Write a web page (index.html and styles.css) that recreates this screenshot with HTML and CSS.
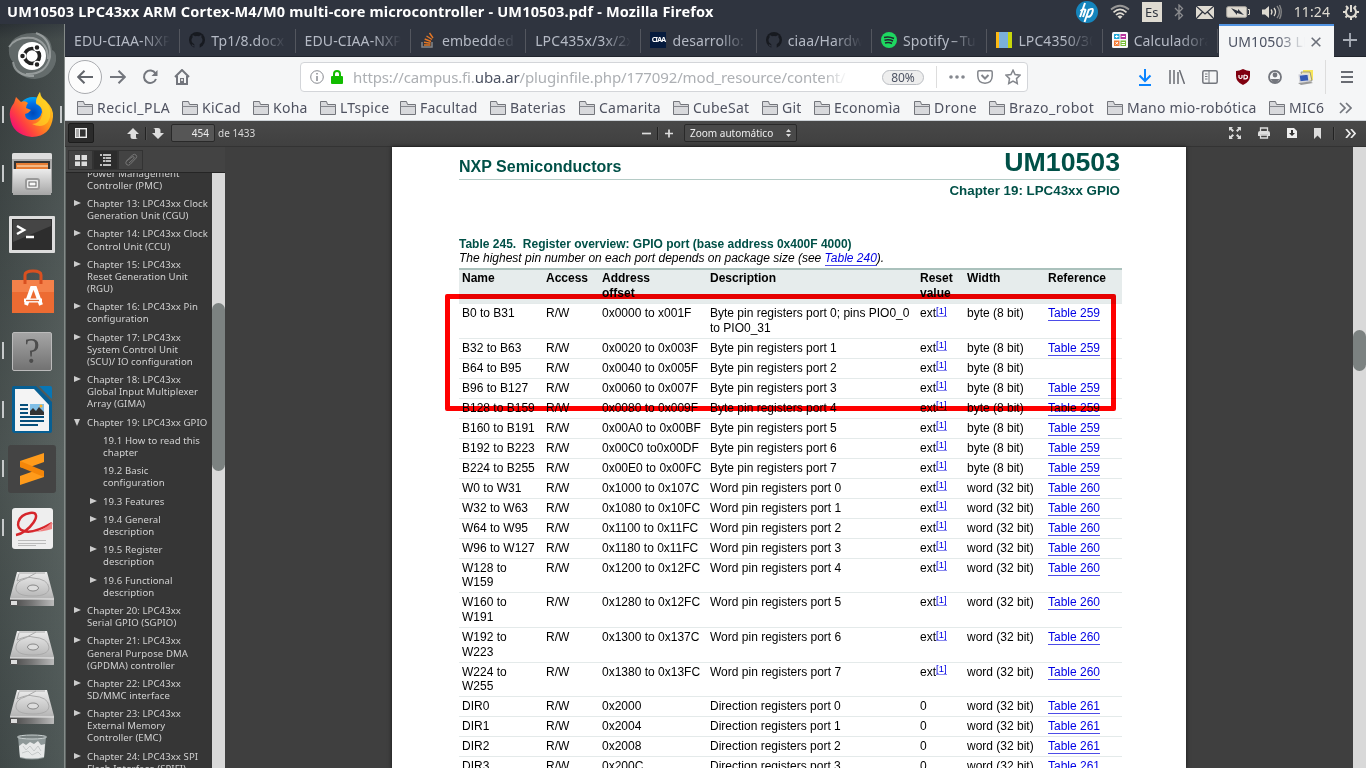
FILE: index.html
```html
<!DOCTYPE html>
<html lang="es">
<head>
<meta charset="utf-8">
<title>UM10503.pdf - Mozilla Firefox</title>
<link rel="stylesheet" href="styles.css">
</head>
<body>
<svg class="defs" width="0" height="0">
<defs>
<linearGradient id="metal" x1="0" y1="0" x2="0" y2="1"><stop offset="0" stop-color="#ececec"/><stop offset="1" stop-color="#a5a5a5"/></linearGradient>
<linearGradient id="edge"><stop offset="0" stop-color="#444"/><stop offset=".5" stop-color="#777"/><stop offset="1" stop-color="#bbb"/></linearGradient>
<linearGradient id="fox" x1="1" y1="0" x2="0" y2=".8"><stop offset="0" stop-color="#ffe226"/><stop offset=".45" stop-color="#ff9417"/><stop offset=".75" stop-color="#ff4140"/><stop offset="1" stop-color="#f0047f"/></linearGradient>
<radialGradient id="globe"><stop offset="0" stop-color="#0048b8"/><stop offset=".6" stop-color="#0070e8"/><stop offset="1" stop-color="#00a5f4"/></radialGradient>
<symbol id="folder" viewBox="0 0 16 14"><path d="M.5 13.500V.5H6.500L7.500 3.500H15.500V13.500Z" fill="#d8d9dc" stroke="#73757b"/><path d="M.5 5.500H15.500" stroke="#85878d"/></symbol>
<symbol id="disk" viewBox="0 0 48 38"><path d="M9 2H39L46 28V35Q46 36 45 36H3Q2 36 2 35V28Z" fill="url(#metal)"/><path d="M2 29H46V35Q46 36 45 36H3Q2 36 2 35Z" fill="url(#edge)"/><path d="M2 29H46" stroke="#eee"/><rect x="3" y="31" width="6" height="4" fill="#ddd"/><path d="M11 3H37M11 4L9 11Q20 6 25 8Q40 9 41 18C41 24 34 26 25 26C13 26 7 23 8 17Q9 11 17 9L28 3" fill="none" stroke="#aaa"/><ellipse cx="25" cy="18" rx="5.500" ry="3" fill="#ddd" stroke="#888"/></symbol>
<symbol id="github" viewBox="0 0 16 16"><circle cx="8" cy="8" r="8" fill="#171a20"/><path d="M5.300 16V12.200C1.500 10.500 2.300 6.500 3.600 5.600L3.500 3.300Q5 3.300 6 4.200Q8 3.800 10 4.200Q11 3.300 12.500 3.300L12.400 5.600C13.700 6.500 14.500 10.500 10.700 12.200V16Z" fill="#2f343f"/><path d="M5.300 13.800Q3.800 14.200 3 12.500" fill="none" stroke="#2f343f" stroke-width="1.200"/></symbol>
<symbol id="clip" viewBox="0 0 14 14"><path d="M2.500 8L8.500 2Q10.500 .5 12 2Q13.500 3.500 12 5.200L6 11.500Q4.500 13 2.500 11.500Q1 10 2.500 8L8 4Q9.500 3 10 4Q10.500 5 9.500 6L5 10" fill="none" stroke="#777"/></symbol>
</defs>
</svg>
<header class="titlebar">
  <div class="window-title">UM10503 LPC43xx ARM Cortex-M4/M0 multi-core microcontroller - UM10503.pdf - Mozilla Firefox</div>
  <div class="indicators">
    <svg class="i-hp" width="22" height="22" viewBox="0 0 22 22"><circle cx="11" cy="11" r="11" fill="#1585bd"/><path d="M9 2L4 16M4.500 10Q8 7 9.500 9L7 16M13 8L8.500 21M12.700 9Q18 6 16.500 11Q15 17 10.500 15.500" fill="none" stroke="#fff" stroke-width="2"/></svg>
    <svg width="20" height="16" viewBox="0 0 20 16"><g fill="none" stroke="#dfdbd2" stroke-width="1.700"><path d="M1 5.500Q10-2 19 5.500" opacity=".6"/><path d="M3.500 8.300Q10 2.500 16.500 8.300M6 11Q10 7 14 11"/></g><path d="M7.500 12.500Q10 10.500 12.500 12.500L10 15Z" fill="#dfdbd2"/></svg>
    <span class="lang">Es</span>
    <svg width="10" height="16" viewBox="0 0 10 16"><path d="M1 4L8.500 11.500L5 15V1L8.500 4.500L1 12" fill="none" stroke="#8b8c8f" stroke-width="1.300"/></svg>
    <svg width="18" height="13" viewBox="0 0 18 13"><rect width="18" height="13" fill="#dfdbd2"/><path d="M0 0L9 8L18 0M0 13L6.500 6M18 13L11.500 6" fill="none" stroke="#2f343f" stroke-width="1.300"/></svg>
    <svg width="24" height="12" viewBox="0 0 24 12"><rect x=".7" y=".7" width="20" height="10.600" rx="1.500" fill="#dfdbd2" stroke="#aaa79f"/><path d="M22 3.500H23.500V8.500H22" fill="none" stroke="#dfdbd2"/><path d="M5 2L12 5L12 3L18 9L11 7V9Z" fill="#2f343f"/></svg>
    <svg width="20" height="14" viewBox="0 0 20 14"><path d="M0 4.500H3L7 1V13L3 9.500H0Z" fill="#dfdbd2"/><g fill="none" stroke="#dfdbd2" stroke-width="1.300"><path d="M9 4.500Q11 7 9 9.500M12 3Q15 7 12 11"/><path d="M15 1Q20 7 15 13M17.500 0Q21 7 17.500 14" opacity=".5"/></g></svg>
    <span class="clock">11:24</span>
    <svg width="16" height="16" viewBox="0 0 16 16"><path d="M5.500 3.700A5 5 0 1 0 10.500 3.700M8 1V8" fill="none" stroke="#dfdbd2" stroke-width="2"/><path d="M3 2L5 4M13 2L11 4M0 8H3M16 8H13M2.500 13.500L4.500 11.500M13.500 13.500L11.500 11.500M8 16V13" stroke="#dfdbd2" stroke-width="2"/></svg>
  </div>
</header>
<div class="desktop">
<nav class="launcher">
  <div class="dock"><svg width="48" height="48" viewBox="0 0 48 48"><path d="M4 9Q12 0 28 1Q43 3 44 18Q49 20 48 29Q44 45 27 47Q10 47 5 30Q0 25 1 15Z" fill="#777e7e" opacity=".65"/><path d="M1 15Q8 4 25 6Q40 10 40 27M28 1Q43 6 42 25Q38 43 18 42M5 30Q7 44 26 44" fill="none" stroke="#b2b7b7" opacity=".65" stroke-width="2"/><circle cx="24" cy="24" r="14" fill="#fff"/><circle cx="24" cy="24" r="7.500" fill="none" stroke="#222" stroke-width="3.600"/><g fill="#222" stroke="#fff" stroke-width="1.500"><circle cx="14.500" cy="24" r="3"/><circle cx="29" cy="15.500" r="3"/><circle cx="29" cy="32.500" r="3"/></g></svg></div>
  <div class="dock run active"><svg width="48" height="48" viewBox="0 0 48 48"><circle cx="25" cy="22" r="16" fill="url(#globe)"/><path d="M6 12L8 6L13 11Q17 9 20 12Q18 14 18 17L23 19Q21 22 17 23Q17 29 24 29Q32 29 34 21Q34 15 28 12Q29 5 32 1Q32 7 38 10Q46 18 45 26Q43 45 24 46Q4 44 2 26Q1 20 4 15Z" fill="url(#fox)"/><path d="M32 1Q27 8 28 13Q37 17 34 25Q31 33 24 33Q34 38 40 31Q46 20 37 9Q33 7 32 1" fill="#ffda25" opacity=".65"/></svg></div>
  <div class="dock run"><svg width="48" height="48" viewBox="0 0 48 48"><path d="M4 5Q4 3 6 3H42Q44 3 44 5V43H4Z" fill="#aaa"/><path d="M4 5Q4 3 6 3H42Q44 3 44 5V9H4Z" fill="#ddd"/><rect x="6" y="11" width="36" height="14" fill="#353535"/><path d="M8 13H40V20H8Z" fill="#e77d34"/><path d="M9 16H40" stroke="#fff3d5"/><path d="M5 19H43V45H5Z" fill="url(#metal)"/><rect x="18" y="29" width="13" height="10" rx="2" fill="#eee" stroke="#999" stroke-width="2"/><rect x="21" y="32" width="7" height="4" fill="#f8f8f8" stroke="#666"/></svg></div>
  <div class="dock terminal"><svg width="48" height="48" viewBox="0 0 48 48"><rect x="1" y="5" width="46" height="37" rx="1" fill="#ddd"/><rect x="4" y="8" width="40" height="31" fill="#2d2d2d"/><path d="M5 9H43V15L5 31Z" fill="#454545"/><path d="M9 15L16 19L9 23M18 26H26" stroke="#fff" stroke-width="2.500" fill="none"/></svg></div>
  <div class="dock"><svg width="48" height="48" viewBox="0 0 48 48"><path d="M4 12H46V45H4Z" fill="#ed6b32"/><path d="M4 12H46V24H4Z" fill="#f4814a"/><path d="M17 16V7Q17 3 25 3T33 7V16" fill="none" stroke="#d95020" stroke-width="3"/><path d="M18 37L24 20H27L33 37" fill="none" stroke="#fff" stroke-width="4"/><path d="M16 32.500H34" stroke="#fff" stroke-width="4"/><path d="M18 32.500H31" stroke="#e36a35" stroke-width="1.300"/></svg></div>
  <div class="dock run"><span class="unknown">?</span></div>
  <div class="dock run"><svg width="48" height="48" viewBox="0 0 48 48"><path d="M4 2Q4 0 6 0H28L44 16V45Q44 47 42 47H7Q4 47 4 44Z" fill="#075f93"/><path d="M31 0H42Q44 0 44 2V13Z" fill="#0876b5"/><path d="M7 3H26L41 19V45H7Z" fill="#f4f4f4"/><path d="M12 19H20M12 23H20M12 27H20M12 31H36M12 35H36M12 39H30" stroke="#074f7b" stroke-width="2"/><rect x="22" y="18" width="14" height="11" fill="#80bfe7"/><path d="M22 29V25L25 22L28 25L31 21L36 26V29Z" fill="#333"/><circle cx="33" cy="20" r="1.500" fill="#ffb020"/></svg></div>
  <div class="dock run"><svg width="48" height="48" viewBox="0 0 48 48"><rect width="48" height="48" rx="3" fill="#444"/><path d="M12 16L36 8V17L22 22L36 26V32L12 40V31L26 26L12 22Z" fill="#ff9b1b"/><path d="M12 16V22L36 32V26Z" fill="#f48609"/></svg></div>
  <div class="dock run"><svg width="48" height="48" viewBox="0 0 48 48"><rect x="4" y="4" width="41" height="41" rx="3" fill="#eee"/><path d="M8 31C21 29 37 7 22 9C9 11 6 25 16 27Q25 30 44 19" fill="none" stroke="#d6262b" stroke-width="2.500"/><path d="M23 28Q35 28 44 18V25Q35 28 23 28" fill="#f08080"/><path d="M10 36.500H38M10 39.500H38M10 41.500H28" stroke="#bbb"/></svg></div>
  <div class="dock disk"><svg width="48" height="38"><use href="#disk"/></svg></div>
  <div class="dock disk"><svg width="48" height="38"><use href="#disk"/></svg></div>
  <div class="dock disk"><svg width="48" height="38"><use href="#disk"/></svg></div>
  <div class="trash"><svg width="32" height="26" viewBox="0 0 32 26"><path d="M2 3H30L28 24Q16 27 4 24Z" fill="#8e9898"/><ellipse cx="16" cy="3" rx="14.500" ry="2" fill="#778080" stroke="#c9d0d0"/><path d="M3 12L7 9L10 11L14 8L18 10L22 7L25 11L29 10L28 23Q16 26 4 23Z" fill="#e6e8e8"/><path d="M7 12L10 16L14 12L18 17L22 12L25 17M6 19L12 17L16 21L22 18L25 21" fill="none" stroke="#c6caca"/></svg></div>
</nav>
<main class="browser">
  <div class="tabs">
    <div class="tab"><span>EDU-CIAA-NXP</span></div>
    <div class="tab"><svg width="16" height="16"><use href="#github"/></svg><span>Tp1/8.docx</span></div>
    <div class="tab"><span>EDU-CIAA-NXP</span></div>
    <div class="tab"><svg width="16" height="16" viewBox="0 0 16 16"><path d="M2 10V15H12V10" fill="none" stroke="#85868a" stroke-width="1.500"/><path d="M4 13H10.500M4 10.300L10.500 11.200M4.700 7L11 9.500M6.500 4L12 7.500M9.500 1L13 6" stroke="#e47725" stroke-width="1.400"/></svg><span>embedded</span></div>
    <div class="tab"><span>LPC435x/3x/2x</span></div>
    <div class="tab"><b class="ciaa">CIAA</b><span>desarrollo:</span></div>
    <div class="tab"><svg width="16" height="16"><use href="#github"/></svg><span>ciaa/Hardware</span></div>
    <div class="tab"><svg width="16" height="16" viewBox="0 0 16 16"><circle cx="8" cy="8" r="8" fill="#1ed760"/><path d="M3 5.500Q8 4 13 6.500M3.500 8.300Q8 7 12 9M4 11Q8 10 11 11.500" fill="none" stroke="#20262e" stroke-width="1.500"/></svg><span class="tight">Spotify – Tu</span></div>
    <div class="tab"><i class="stripes"></i><span>LPC4350/30</span></div>
    <div class="tab"><svg width="16" height="16" viewBox="0 0 16 16"><rect width="16" height="16" rx="1.500" fill="#f8f8fa"/><path d="M2 2H7.500V7H2Z" fill="#23a8d9"/><path d="M8.500 2H14V7H8.500Z" fill="#b7359f"/><path d="M2 8.500H7.500V14H2Z" fill="#f47a35"/><path d="M8.500 8.500H14V14H8.500Z" fill="#77bc35"/><path d="M3 4.500H6.500M4.700 3V6M9.500 4.500H13M3.500 10L6 12.500M6 10L3.500 12.500M9.500 10.500H13M9.500 12.500H13" stroke="#fff"/></svg><span>Calculadora</span></div>
    <div class="tab current"><span>UM10503 LPC</span><svg width="10" height="10" viewBox="0 0 10 10"><path d="M.7 .7L9.300 9.300M9.300 .7L.7 9.300" stroke="#6c707a" stroke-width="1.600"/></svg></div>
    <div class="newtab"><svg width="14" height="14" viewBox="0 0 14 14"><path d="M7 0V14M0 7H14" stroke="#aaafb8" stroke-width="1.800"/></svg></div>
  </div>
  <div class="nav">
    <span class="back"><svg width="16" height="14" viewBox="0 0 16 14"><path d="M16 7H1M7.500 .7L1.200 7L7.500 13.300" fill="none" stroke="#63666c" stroke-width="2"/></svg></span>
    <svg class="forward" width="16" height="14" viewBox="0 0 16 14"><path d="M0 7H15M8.500 .7L14.800 7L8.500 13.300" fill="none" stroke="#73767d" stroke-width="2"/></svg>
    <svg class="reload" width="16" height="16" viewBox="0 0 16 16"><path d="M13.500 4.500A6.200 6.200 0 1 0 14 10" fill="none" stroke="#73767d" stroke-width="2"/><path d="M15.500 1V7H9.500Z" fill="#73767d"/></svg>
    <svg class="home" width="16" height="16" viewBox="0 0 16 16"><path d="M1 8L8 1L15 8M3 7V15H13V7" fill="none" stroke="#73767d" stroke-width="2"/><path d="M6 15V9H10V15" fill="#73767d"/><circle cx="8" cy="11" r="1" fill="#fff"/></svg>
    <div class="urlbox">
      <svg width="14" height="14" viewBox="0 0 14 14"><circle cx="7" cy="7" r="6.300" fill="none" stroke="#888b91"/><path d="M7 6V11M7 3V4.500" stroke="#888b91" stroke-width="1.500"/></svg>
      <svg class="lock" width="12" height="14" viewBox="0 0 12 14"><path d="M3 7V4Q3 1 6 1T9 4V7" fill="none" stroke="#12bc00" stroke-width="2"/><rect y="6" width="12" height="8" rx="1" fill="#12bc00"/></svg>
      <span class="url">https://campus.fi.<b>uba.ar</b>/pluginfile.php/177092/mod_resource/content/</span>
      <span class="zoomlevel">80%</span><i class="urlsep"></i>
      <svg class="dots" width="18" height="4" viewBox="0 0 18 4"><g fill="#85888f"><circle cx="3" cy="2" r="1.800"/><circle cx="9" cy="2" r="1.800"/><circle cx="15" cy="2" r="1.800"/></g></svg>
      <svg class="pocket" width="16" height="14" viewBox="0 0 16 14"><path d="M2 .8H14Q15.200 .8 15.200 2V6Q15 13 8 13.200Q1 13 .8 6V2Q.8 .8 2 .8Z" fill="none" stroke="#83868c" stroke-width="1.500"/><path d="M4.500 5L8 8.500L11.500 5" fill="none" stroke="#83868c" stroke-width="2"/></svg>
      <svg width="16" height="16" viewBox="0 0 16 16"><path d="M8 1.200L10.100 5.500L15 6.200L11.500 9.600L12.300 14.500L8 12.200L3.700 14.500L4.500 9.600L1 6.200L5.900 5.500Z" fill="none" stroke="#83868c" stroke-width="1.500"/></svg>
    </div>
    <div class="tools">
      <svg width="14" height="17" viewBox="0 0 14 17"><path d="M7 0V12M1.500 6.500L7 12L12.500 6.500M1 16H13" fill="none" stroke="#0a84ff" stroke-width="2"/></svg>
      <svg width="16" height="14" viewBox="0 0 16 14"><path d="M1 0V14M5 0V14M9 2V14M10.500 0L15.500 14" stroke="#696c73" stroke-width="1.500"/></svg>
      <svg width="16" height="14" viewBox="0 0 16 14"><rect x=".8" y=".8" width="14.400" height="12.400" rx="1.500" fill="none" stroke="#73767d" stroke-width="1.500"/><path d="M7 1V13M3 4H5.500M3 6.500H5.500M3 9H5.500" stroke="#73767d"/></svg>
      <svg width="16" height="16" viewBox="0 0 16 16"><path d="M8 0Q12 2 15 2V7Q15 13 8 16Q1 13 1 7V2Q4 2 8 0Z" fill="#800010"/><path d="M4 6V8.500Q5.500 10.500 7 8.500V6M9 6V10Q12.500 10 12.500 8Q12.500 6 9 6" fill="none" stroke="#fff" stroke-width="1.200"/></svg>
      <svg width="14" height="14" viewBox="0 0 14 14"><circle cx="7" cy="7" r="6" fill="none" stroke="#73767d" stroke-width="1.800"/><circle cx="7" cy="5" r="2.400" fill="#73767d"/><path d="M2.500 9H11.500Q9 12.500 7 12.500T2.500 9" fill="#73767d"/></svg>
      <svg width="16" height="16" viewBox="0 0 16 16"><path d="M5 1H15V11H13L5 7Z" fill="#f8e65a"/><path d="M3 3H12L14 12H5Z" fill="#f5ebb0" stroke="#777" stroke-width=".7"/><path d="M1 6L10 5L11 12L2 13Z" fill="#3559b4" stroke="#d9d9dd" stroke-width="1.300"/><path d="M0 14L12 12.500L15 14L3 16Z" fill="#999"/></svg>
      <i class="navsep"></i><svg class="hamburger" width="12" height="12" viewBox="0 0 12 12"><path d="M0 1H12M0 6H12M0 11H12" stroke="#696c73" stroke-width="1.800"/></svg>
    </div>
  </div>
  <div class="bookmarks">
    <span class="wide"><svg><use href="#folder"/></svg>Recicl_PLA</span><span><svg><use href="#folder"/></svg>KiCad</span><span><svg><use href="#folder"/></svg>Koha</span><span><svg><use href="#folder"/></svg>LTspice</span><span><svg><use href="#folder"/></svg>Facultad</span><span><svg><use href="#folder"/></svg>Baterias</span><span><svg><use href="#folder"/></svg>Camarita</span><span><svg><use href="#folder"/></svg>CubeSat</span><span><svg><use href="#folder"/></svg>Git</span><span><svg><use href="#folder"/></svg>Economìa</span><span class="wide"><svg><use href="#folder"/></svg>Drone</span><span class="wide"><svg><use href="#folder"/></svg>Brazo_robot</span><span><svg><use href="#folder"/></svg>Mano mio-robótica</span><span><svg><use href="#folder"/></svg>MIC6</span>
    <svg class="more" viewBox="0 0 13 12"><path d="M1 1L6 6L1 11M7 1L12 6L7 11" fill="none" stroke="#73767d" stroke-width="1.700"/></svg>
  </div>
  <div class="pdfbar">
    <div class="toggle"><svg width="12" height="10" viewBox="0 0 12 10"><rect x=".7" y=".7" width="10.600" height="8.600" fill="#333" stroke="#eee" stroke-width="1.400"/><path d="M1 1H4V9H1Z" fill="#aaa"/><path d="M4.500 1V9" stroke="#eee"/></svg></div>
    <svg class="up" width="12" height="11" viewBox="0 0 12 11"><path d="M6 0L12 6H9V9Q9 11 11 11H6Q3.500 11 3.500 8.500V6H0Z" fill="#ddd"/></svg><i class="split"></i>
    <svg class="down" width="12" height="11" viewBox="0 0 12 11"><path d="M1 0H6Q8.500 0 8.500 2.500V5H12L6 11L0 5H3V2Q3 0 1 0Z" fill="#ddd"/></svg>
    <div class="pageno">454</div><span class="pagecount">de 1433</span>
    <svg class="minus" width="9" height="9" viewBox="0 0 9 9"><path d="M0 4.500H9" stroke="#ddd" stroke-width="1.700"/></svg><i class="split"></i><svg class="plus" width="9" height="9" viewBox="0 0 9 9"><path d="M0 4.500H8M4 .5V8.500" stroke="#ddd" stroke-width="1.700"/></svg>
    <div class="zoomselect">Zoom automático<svg width="5" height="8" viewBox="0 0 5 8"><path d="M0 3L2.500 0L5 3ZM0 5H5L2.500 8Z" fill="#ddd"/></svg></div>
    <div class="pdftools">
      <svg width="12" height="12" viewBox="0 0 12 12"><path d="M0 0H4L2.700 1.300L5 3.500L3.500 5L1.300 2.700L0 4ZM12 0V4L10.700 2.700L8.500 5L7 3.500L9.300 1.300L8 0ZM0 12V8L1.300 9.300L3.500 7L5 8.500L2.700 10.700L4 12ZM12 12H8L9.300 10.700L7 8.500L8.500 7L10.700 9.300L12 8Z" fill="#ddd"/></svg>
      <svg width="12" height="12" viewBox="0 0 12 12"><path d="M2.500 4V1H9.500V4M2.500 8H9.500V11H2.500Z" fill="none" stroke="#ddd" stroke-width="1.300"/><path d="M2 4H10Q12 4 12 6V9H10V7.500H2V9H0V6Q0 4 2 4Z" fill="#ddd"/></svg>
      <svg width="10" height="12" viewBox="0 0 10 12"><path d="M0 1H7L10 4V11H0Z" fill="#eee"/><path d="M4 3H6V6H8L5 9L2 6H4Z" fill="#333"/></svg>
      <svg width="7" height="11" viewBox="0 0 7 11"><path d="M0 0H7V11L3.500 7.500L0 11Z" fill="#ddd"/></svg><i class="split"></i>
      <svg width="11" height="9" viewBox="0 0 11 9"><path d="M1 0L5 4.500L1 9M6 0L10 4.500L6 9" fill="none" stroke="#eee" stroke-width="1.700"/></svg>
    </div>
  </div>
  <div class="viewer">
    <aside class="sidebar">
      <div class="sidebar-tools">
        <div><svg width="12" height="11" viewBox="0 0 12 11"><path d="M0 0H5V5H0ZM6.500 0H12V5H6.500ZM0 6.500H5V11H0ZM6.500 6.500H12V11H6.500Z" fill="#ddd"/></svg></div><div class="pressed"><svg width="11" height="12" viewBox="0 0 11 12"><path d="M0 1H2M3 1H11M3 4H5M5.500 4H11M3 7H5M5.500 7H11M0 11H2M3 11H11" stroke="#eee" stroke-width="1.500"/></svg></div><div><svg width="14" height="14"><use href="#clip"/></svg></div>
      </div>
      <div class="outline-area">
        <div class="outline">
          <p class="first">Power Management<br>Controller (PMC)</p>
          <p class="closed">Chapter 13: LPC43xx Clock<br>Generation Unit (CGU)</p>
          <p class="closed">Chapter 14: LPC43xx Clock<br>Control Unit (CCU)</p>
          <p class="closed">Chapter 15: LPC43xx<br>Reset Generation Unit<br>(RGU)</p>
          <p class="closed">Chapter 16: LPC43xx Pin<br>configuration</p>
          <p class="closed">Chapter 17: LPC43xx<br>System Control Unit<br>(SCU)/ IO configuration</p>
          <p class="closed">Chapter 18: LPC43xx<br>Global Input Multiplexer<br>Array (GIMA)</p>
          <p class="open">Chapter 19: LPC43xx GPIO</p>
          <p class="sub">19.1 How to read this<br>chapter</p>
          <p class="sub">19.2 Basic<br>configuration</p>
          <p class="sub closed">19.3 Features</p>
          <p class="sub closed">19.4 General<br>description</p>
          <p class="sub closed">19.5 Register<br>description</p>
          <p class="sub closed">19.6 Functional<br>description</p>
          <p class="closed">Chapter 20: LPC43xx<br>Serial GPIO (SGPIO)</p>
          <p class="closed">Chapter 21: LPC43xx<br>General Purpose DMA<br>(GPDMA) controller</p>
          <p class="closed">Chapter 22: LPC43xx<br>SD/MMC interface</p>
          <p class="closed">Chapter 23: LPC43xx<br>External Memory<br>Controller (EMC)</p>
          <p class="closed">Chapter 24: LPC43xx SPI<br>Flash Interface (SPIFI)</p>
        </div>
        <div class="scroll side-scroll"><i></i></div>
      </div>
    </aside>
    <section class="canvas">
      <article class="page">
        <div class="page-head"><span>NXP Semiconductors</span><strong>UM10503</strong></div>
        <div class="chapter">Chapter 19: LPC43xx GPIO</div>
        <div class="caption">Table 245.&nbsp; Register overview: GPIO port (base address 0x400F 4000)</div>
        <div class="note">The highest pin number on each port depends on package size (see <a>Table 240</a>).</div>
        <table>
          <colgroup><col class="c1"><col class="c2"><col class="c3"><col class="c4"><col class="c5"><col class="c6"><col class="c7"></colgroup>
          <thead><tr><th>Name</th><th>Access</th><th>Address<br>offset</th><th>Description</th><th>Reset<br>value</th><th>Width</th><th>Reference</th></tr></thead>
          <tbody>
          <tr class="tall"><td>B0 to B31</td><td>R/W</td><td>0x0000 to x001F</td><td>Byte pin registers port 0; pins PIO0_0<br>to PIO0_31</td><td>ext<sup>[1]</sup></td><td>byte (8 bit)</td><td><a>Table 259</a></td></tr>
          <tr><td>B32 to B63</td><td>R/W</td><td>0x0020 to 0x003F</td><td>Byte pin registers port 1</td><td>ext<sup>[1]</sup></td><td>byte (8 bit)</td><td><a>Table 259</a></td></tr>
          <tr><td>B64 to B95</td><td>R/W</td><td>0x0040 to 0x005F</td><td>Byte pin registers port 2</td><td>ext<sup>[1]</sup></td><td>byte (8 bit)</td><td></td></tr>
          <tr><td>B96 to B127</td><td>R/W</td><td>0x0060 to 0x007F</td><td>Byte pin registers port 3</td><td>ext<sup>[1]</sup></td><td>byte (8 bit)</td><td><a>Table 259</a></td></tr>
          <tr><td>B128 to B159</td><td>R/W</td><td>0x0080 to 0x009F</td><td>Byte pin registers port 4</td><td>ext<sup>[1]</sup></td><td>byte (8 bit)</td><td><a>Table 259</a></td></tr>
          <tr><td>B160 to B191</td><td>R/W</td><td>0x00A0 to 0x00BF</td><td>Byte pin registers port 5</td><td>ext<sup>[1]</sup></td><td>byte (8 bit)</td><td><a>Table 259</a></td></tr>
          <tr><td>B192 to B223</td><td>R/W</td><td>0x00C0 to0x00DF</td><td>Byte pin registers port 6</td><td>ext<sup>[1]</sup></td><td>byte (8 bit)</td><td><a>Table 259</a></td></tr>
          <tr><td>B224 to B255</td><td>R/W</td><td>0x00E0 to 0x00FC</td><td>Byte pin registers port 7</td><td>ext<sup>[1]</sup></td><td>byte (8 bit)</td><td><a>Table 259</a></td></tr>
          <tr><td>W0 to W31</td><td>R/W</td><td>0x1000 to 0x107C</td><td>Word pin registers port 0</td><td>ext<sup>[1]</sup></td><td>word (32 bit)</td><td><a>Table 260</a></td></tr>
          <tr><td>W32 to W63</td><td>R/W</td><td>0x1080 to 0x10FC</td><td>Word pin registers port 1</td><td>ext<sup>[1]</sup></td><td>word (32 bit)</td><td><a>Table 260</a></td></tr>
          <tr><td>W64 to W95</td><td>R/W</td><td>0x1100 to 0x11FC</td><td>Word pin registers port 2</td><td>ext<sup>[1]</sup></td><td>word (32 bit)</td><td><a>Table 260</a></td></tr>
          <tr><td>W96 to W127</td><td>R/W</td><td>0x1180 to 0x11FC</td><td>Word pin registers port 3</td><td>ext<sup>[1]</sup></td><td>word (32 bit)</td><td><a>Table 260</a></td></tr>
          <tr class="tall"><td>W128 to<br>W159</td><td>R/W</td><td>0x1200 to 0x12FC</td><td>Word pin registers port 4</td><td>ext<sup>[1]</sup></td><td>word (32 bit)</td><td><a>Table 260</a></td></tr>
          <tr class="tall"><td>W160 to<br>W191</td><td>R/W</td><td>0x1280 to 0x12FC</td><td>Word pin registers port 5</td><td>ext<sup>[1]</sup></td><td>word (32 bit)</td><td><a>Table 260</a></td></tr>
          <tr class="tall"><td>W192 to<br>W223</td><td>R/W</td><td>0x1300 to 0x137C</td><td>Word pin registers port 6</td><td>ext<sup>[1]</sup></td><td>word (32 bit)</td><td><a>Table 260</a></td></tr>
          <tr class="tall"><td>W224 to<br>W255</td><td>R/W</td><td>0x1380 to 0x13FC</td><td>Word pin registers port 7</td><td>ext<sup>[1]</sup></td><td>word (32 bit)</td><td><a>Table 260</a></td></tr>
          <tr><td>DIR0</td><td>R/W</td><td>0x2000</td><td>Direction registers port 0</td><td>0</td><td>word (32 bit)</td><td><a>Table 261</a></td></tr>
          <tr><td>DIR1</td><td>R/W</td><td>0x2004</td><td>Direction registers port 1</td><td>0</td><td>word (32 bit)</td><td><a>Table 261</a></td></tr>
          <tr><td>DIR2</td><td>R/W</td><td>0x2008</td><td>Direction registers port 2</td><td>0</td><td>word (32 bit)</td><td><a>Table 261</a></td></tr>
          <tr><td>DIR3</td><td>R/W</td><td>0x200C</td><td>Direction registers port 3</td><td>0</td><td>word (32 bit)</td><td><a>Table 261</a></td></tr>
          </tbody>
        </table>
        <div class="highlight"></div>
      </article>
      <div class="scroll main-scroll"><i></i></div>
    </section>
  </div>
</main>
</div>
</body>
</html>
```

FILE: styles.css
```css
* { box-sizing: border-box; }
body { margin: 0; width: 1366px; height: 768px; overflow: hidden; display: flex; flex-direction: column; font: 14px "Noto Sans", sans-serif; }
.defs { position: absolute; }
svg { display: block; flex: none; }
i { display: block; flex: none; }
.titlebar { height: 24px; flex: none; background: #2f343f; color: #fff; display: flex; align-items: center; justify-content: space-between; padding: 0 7px; }
.window-title { font-weight: bold; font-size: 14.5px; letter-spacing: .17px; white-space: nowrap; padding-bottom: 2px; }
.indicators { display: flex; align-items: center; }
.indicators > * { margin-left: 12px; }
.indicators > :last-child { margin-left: 13px; }
.lang { width: 20px; height: 20px; background: #dfdbd2; color: #2f343f; font-size: 13px; line-height: 20px; text-align: center; }
.clock { font-size: 14px; color: #dfdbd2; padding-bottom: 1px; letter-spacing: .1px; }
.desktop { display: flex; flex: 1; min-height: 0; }
.launcher { width: 65px; flex: none; padding-top: 2px; border-right: 1px solid #858b89; background: linear-gradient(90deg, rgba(15,20,20,.2), rgba(90,100,98,.2)), linear-gradient(#30363b, #404747 15px, #596260 430px, #4c5554); display: flex; flex-direction: column; }
.dock { height: 59px; flex: none; display: flex; align-items: center; justify-content: center; position: relative; }
.dock.terminal { padding-top: 4px; }
.dock.disk { align-items: flex-end; padding-bottom: 8px; }
.dock.run::before, .dock.active::after { content: ""; position: absolute; left: 2px; top: 21px; width: 2px; height: 17px; background: #c6c9ca; }
.dock.active::after { left: 60px; }
.unknown { width: 40px; height: 39px; margin-top: 2px; border-radius: 2px; background: linear-gradient(#a5a5a5, #727272); border: 1px solid #bbb; color: #4c4c4c; text-align: center; font: 35px/37px "Liberation Serif", serif; }
.trash { display: flex; justify-content: center; }
.browser { flex: 1; min-width: 0; display: flex; flex-direction: column; background: #f5f6f7; }
.tabs { height: 33px; flex: none; background: #2f343f; border-bottom: 1px solid #21252d; display: flex; color: #b5bac5; }
.tab { width: 115.3px; flex: none; padding: 0 10px 0 9px; display: flex; align-items: center; gap: 6px; position: relative; }
.tab::after { content: ""; position: absolute; right: 0; top: 5px; height: 24px; width: 1px; background: #53565e; }
.tab span { min-width: 0; flex: 1; overflow: hidden; white-space: nowrap; letter-spacing: .1px; -webkit-mask-image: linear-gradient(90deg, #000 calc(100% - 28px), transparent); }
.tab span.tight { word-spacing: -2px; }
.tab.current { margin-left: 1px; background: #f5f6f7; color: #4c5262; border-top: 2px solid #5294e2; height: 33px; }
.tab.current::after { display: none; }
.tab.current svg { margin-right: 3px; }
.newtab { flex: 1; display: flex; align-items: center; justify-content: center; }
.ciaa { width: 16px; height: 16px; background: #061b3d; color: #fff; font-size: 7px; line-height: 16px; letter-spacing: -.8px; text-align: center; overflow: hidden; }
.stripes { width: 16px; height: 16px; background: linear-gradient(90deg, #fdb913 3px, #7bb1db 3px 12px, #c7d70b 12px); }
.nav { height: 40px; flex: none; display: flex; align-items: center; padding-left: 3px; }
.back { width: 34px; height: 34px; border: 1px solid #a9abaf; border-radius: 50%; background: #fcfcfc; display: flex; align-items: center; justify-content: center; }
.forward { margin-left: 8px; }
.reload { margin-left: 16px; }
.home { margin-left: 16px; }
.urlbox { width: 728px; height: 30px; margin-left: 110px; background: #fff; border: 1px solid #d3d5d9; border-radius: 4px; display: flex; align-items: center; padding-left: 9px; }
.lock { margin-left: 7px; }
.url { width: 495px; margin-left: 10px; overflow: hidden; white-space: nowrap; color: #adb0b4; font-size: 15px; letter-spacing: -.13px; -webkit-mask-image: linear-gradient(90deg, #000 470px, transparent); }
.url b { font-weight: normal; color: #4c5262; }
.zoomlevel { margin-left: 34px; width: 42px; height: 15px; border: 1px solid #bbbec3; border-radius: 8px; background: #eee; font-size: 12px; line-height: 13px; color: #4c5262; text-align: center; }
.urlsep { width: 1px; height: 22px; margin: 0 11px 0 12px; background: #ddd; }
.pocket { margin: 0 12px 0 11px; }
.tools { flex: 1; display: flex; align-items: center; justify-content: flex-end; gap: 16.8px; padding-right: 13px; }
.navsep { width: 1px; height: 34px; margin-left: -6px; background: #ddd; }
.hamburger { margin-left: -2px; }
.bookmarks { height: 24px; flex: none; border-bottom: 1px solid #ccd1d6; display: grid; grid-template-columns: 105px 71px 67px 80px 90px 89px 94px 89px 52px 100px 75px 118px 162px 70px 1fr; padding: 0 0 2px 12px; align-items: center; color: #4f5260; }
.bookmarks span { display: flex; align-items: center; gap: 4px; white-space: nowrap; letter-spacing: .25px; }
.bookmarks span.wide { letter-spacing: .5px; }
.bookmarks span svg { width: 16px; height: 14px; }
.bookmarks .more { width: 13px; height: 12px; }
.pdfbar { height: 26px; flex: none; background: linear-gradient(#484848, #404040); border-bottom: 1px solid #333; display: flex; align-items: center; color: #d9d9d9; font-size: 10px; padding: 0 0 1px 3px; }
.toggle { width: 26px; height: 20px; background: #2b2b2b; border: 1px solid #1c1c1c; border-radius: 2px; display: flex; align-items: center; justify-content: center; }
.up { margin-left: 33px; }
.split { width: 1px; height: 13px; background: #222; box-shadow: 1px 0 #505050; margin: 0 6px; }
.pageno { width: 44px; height: 18px; margin-left: 7px; border: 1px solid #292929; border-radius: 2px; background: #565656; text-align: right; line-height: 16px; padding-right: 5px; color: #eee; }
.pagecount { margin-left: 3px; width: 60px; }
.minus { margin-left: 364px; }
.plus { margin-left: 1px; }
.zoomselect { margin-left: 10px; width: 113px; height: 18px; border: 1px solid #292929; background: #494949; border-radius: 2px; display: flex; align-items: center; justify-content: space-between; padding: 0 5px; color: #eee; }
.pdftools { flex: 1; display: flex; justify-content: flex-end; align-items: center; gap: 17px; padding-right: 10px; }
.pdftools .split { margin: 0 -6px 0 -5px; }
.viewer { flex: 1; min-height: 0; display: flex; }
.sidebar { width: 160px; flex: none; background: #363636; display: flex; flex-direction: column; border-left: 1px solid #606765; }
.sidebar-tools { height: 26px; flex: none; background: #434343; border-bottom: 1px solid #252525; padding: 3px 2px; display: flex; }
.sidebar-tools div { width: 25px; height: 20px; border: 1px solid #333; display: flex; align-items: center; justify-content: center; }
.sidebar-tools .pressed { background: #2c2c2c; }
.outline-area { flex: 1; min-height: 0; display: flex; }
.outline { flex: 1; overflow: hidden; color: #d1d1d1; font-size: 9.6px; line-height: 12.1px; letter-spacing: .07px; white-space: nowrap; padding-left: 21px; }
.outline p { margin: 0 0 6.2px; position: relative; }
.outline p.first { margin-top: -5.3px; }
.outline p.sub { margin-left: 16px; }
.closed::before, .open::before { content: ""; position: absolute; left: -13px; top: 2px; border: solid transparent; border-width: 3.5px 0 3.5px 7px; border-left-color: #ccc; }
.open::before { border-width: 7px 3.5px 0; border-color: #ccc transparent transparent; }
.scroll { width: 13px; background: #d9d9d9; flex: none; }
.scroll i { background: #7c8281; border-radius: 7px; }
.side-scroll i { height: 168px; margin-top: 130px; }
.main-scroll i { height: 41px; margin-top: 183px; }
.canvas { flex: 1; display: flex; background: #3f3f3f; min-width: 0; }
.page { width: 794px; margin: 0 auto 0 167px; background: #fff; box-shadow: 0 0 4px #151515; padding: 0 64px 0 67px; position: relative; font: 12px/15px "Liberation Sans", sans-serif; color: #000; white-space: nowrap; }
.page-head { width: 661px; height: 33px; border-bottom: 1px solid #b5cbc6; display: flex; justify-content: space-between; color: #005047; font-weight: bold; font-size: 16px; line-height: 40px; }
.page-head strong { font-size: 26.7px; line-height: 31px; }
.chapter { width: 661px; text-align: right; color: #005047; font-size: 13.35px; font-weight: bold; line-height: 21px; }
.caption { margin-top: 36px; line-height: 14px; font-weight: bold; color: #005047; }
.note { font-style: italic; line-height: 14px; height: 17px; }
.page a { color: #0000e5; border-bottom: 1px solid #4c4ce8; }
table { width: 663px; border-collapse: separate; border-spacing: 0; table-layout: fixed; border-top: 2px solid #aac1bc; }
.c1 { width: 84px; } .c2 { width: 56px; } .c3 { width: 108px; } .c4 { width: 210px; } .c5 { width: 47px; } .c6 { width: 81px; } .c7 { width: 77px; }
th, td { text-align: left; vertical-align: top; padding: 2px 0 0 3px; border-bottom: 1px solid #e4eaea; line-height: 14.5px; }
th { height: 34px; padding-top: 1px; background: #e6ecec; line-height: 15px; }
td { height: 20px; }
tr.tall td { height: 34.7px; }
sup { font-size: 9.5px; line-height: 0; color: #0000e5; border-bottom: 1px solid #8888ee; vertical-align: 3.5px; }
.highlight { position: absolute; left: 53px; top: 147px; width: 671px; height: 117px; border: 5px solid #f00; border-radius: 2px; mix-blend-mode: multiply; }
```
